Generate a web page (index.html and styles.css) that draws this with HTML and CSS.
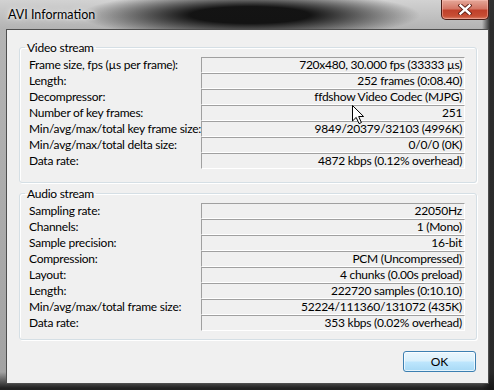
FILE: index.html
```html
<!DOCTYPE html>
<html lang="en">
<head>
  <meta charset="UTF-8" />
  <title>AVI Information</title>
  <link rel="stylesheet" href="styles.css">
</head>
<body>
  <div class="window">
    <div class="titlebar">
      <span class="title">AVI Information</span>
      <button class="close" aria-label="Close">
        <svg width="14" height="11" viewBox="0 0 14 11">
          <path d="M2.5 1.5 L11.5 9.5 M11.5 1.5 L2.5 9.5" stroke="#5a1a10" stroke-width="4.2" stroke-linecap="square"/>
          <path d="M2.5 1.5 L11.5 9.5 M11.5 1.5 L2.5 9.5" stroke="#fff" stroke-width="2.4" stroke-linecap="square"/>
        </svg>
      </button>
    </div>

    <div class="client">
      <fieldset class="group video">
        <legend>Video stream</legend>
        <div class="row"><span class="label">Frame size, fps (µs per frame):</span><span class="value">720x480, 30.000 fps (33333 µs)</span></div>
        <div class="row"><span class="label">Length:</span><span class="value">252 frames (0:08.40)</span></div>
        <div class="row"><span class="label">Decompressor:</span><span class="value">ffdshow Video Codec (MJPG)</span></div>
        <div class="row"><span class="label">Number of key frames:</span><span class="value">251</span></div>
        <div class="row"><span class="label">Min/avg/max/total key frame size:</span><span class="value">9849/20379/32103 (4996K)</span></div>
        <div class="row"><span class="label">Min/avg/max/total delta size:</span><span class="value">0/0/0 (0K)</span></div>
        <div class="row"><span class="label">Data rate:</span><span class="value">4872 kbps (0.12% overhead)</span></div>
      </fieldset>

      <fieldset class="group audio">
        <legend>Audio stream</legend>
        <div class="row"><span class="label">Sampling rate:</span><span class="value">22050Hz</span></div>
        <div class="row"><span class="label">Channels:</span><span class="value">1 (Mono)</span></div>
        <div class="row"><span class="label">Sample precision:</span><span class="value">16-bit</span></div>
        <div class="row"><span class="label">Compression:</span><span class="value">PCM (Uncompressed)</span></div>
        <div class="row"><span class="label">Layout:</span><span class="value">4 chunks (0.00s preload)</span></div>
        <div class="row"><span class="label">Length:</span><span class="value">222720 samples (0:10.10)</span></div>
        <div class="row"><span class="label">Min/avg/max/total frame size:</span><span class="value">52224/111360/131072 (435K)</span></div>
        <div class="row"><span class="label">Data rate:</span><span class="value">353 kbps (0.02% overhead)</span></div>
      </fieldset>

      <div class="buttons">
        <button class="ok">OK</button>
      </div>
    </div>

    <!-- mouse pointer left over the dialog -->
    <svg class="cursor" width="13" height="20" viewBox="0 0 13 20">
      <path d="M0.5 0.5 L0.5 16 L4.2 12.4 L7 18.6 L9.4 17.6 L6.7 11.5 L11.6 11.5 Z" fill="#fff" stroke="#000" stroke-width="1"/>
    </svg>
  </div>
</body>
</html>
```

FILE: styles.css
```css
* {
  box-sizing: border-box;
}
body {
  margin: 0;
  background: #1a1a1a;
  font-family: Lato, "Liberation Sans", sans-serif;
  font-size: 12px;
  letter-spacing: -0.25px;
  color: #000;
}
.window {
  position: relative;
  width: 494px;
  height: 390px;
  display: flex;
  flex-direction: column;
  background:
    linear-gradient(to right, rgba(20,20,20,0) 482px, rgba(20,20,20,.85) 490px),
    linear-gradient(to bottom, rgba(20,20,20,0) 372px, rgba(20,20,20,.9) 388px),
    radial-gradient(ellipse 170px 24px at 250px 15px, rgba(10,10,10,.95) 35%, rgba(10,10,10,0) 100%),
    linear-gradient(to bottom, #d2d2d2 0, #b4b4b4 28px, #a2a2a2 100%);
}
.titlebar {
  height: 29px;
  display: flex;
  justify-content: space-between;
  align-items: flex-start;
  padding: 0 5px 0 8px;
}
.title {
  line-height: 29px;
  font-size: 12.5px;
  letter-spacing: 0;
  color: #000;
  text-shadow: 0 0 6px rgba(255,255,255,.9), 0 0 3px rgba(255,255,255,.8);
}
.close {
  width: 48px;
  height: 20px;
  padding: 0;
  border: 1px solid #4b1d16;
  border-top: none;
  border-radius: 0 0 5px 5px;
  background: linear-gradient(to bottom, #e5a899 0, #d47766 45%, #c0412b 55%, #c84e34 85%, #d9826a 100%);
  box-shadow: inset 0 0 0 1px rgba(255,200,190,.45);
  display: flex;
  align-items: center;
  justify-content: center;
}
.client {
  flex: 1;
  margin: 0 5px 6px 6px;
  border: 1px solid #4e4e4e;
  background: #f0f0f0;
  padding: 10px 11px 0 12px;
  display: flex;
  flex-direction: column;
}
.group {
  margin: 0;
  padding: 2px 11px 13px 9px;
  border: 1px solid #d5dfe5;
  border-radius: 3px;
  box-shadow: inset 1px 1px 0 #fff, 1px 1px 0 #fff;
}
.group.audio {
  margin-top: 3px;
  padding-bottom: 8px;
}
.group legend {
  margin-left: -4px;
  padding: 0 2px;
  line-height: 15px;
  font-size: 12px;
}
.row {
  display: flex;
  height: 16px;
}
.label {
  flex: 1;
  min-width: 0;
  line-height: 16px;
  white-space: nowrap;
}
.value {
  flex: none;
  width: 264px;
  height: 16px;
  border-top: 1px solid #a0a0a0;
  border-left: 1px solid #a0a0a0;
  border-bottom: 1px solid #fff;
  border-right: 1px solid #fff;
  padding-right: 2px;
  text-align: right;
  line-height: 14px;
  white-space: nowrap;
}
.buttons {
  display: flex;
  justify-content: flex-end;
  padding-top: 11px;
  padding-right: 1px;
}
.ok {
  width: 73px;
  height: 21px;
  padding: 0;
  font-family: inherit;
  font-size: 12px;
  color: #000;
  border: 1px solid #3c7fb1;
  border-radius: 3px;
  background: linear-gradient(to bottom, #eaf6fd 0, #d9f0fc 48%, #bee6fd 52%, #a7d9f5 100%);
  box-shadow: inset 0 0 0 1px rgba(255,255,255,.7);
}
.cursor {
  position: absolute;
  left: 352px;
  top: 105px;
}
```
